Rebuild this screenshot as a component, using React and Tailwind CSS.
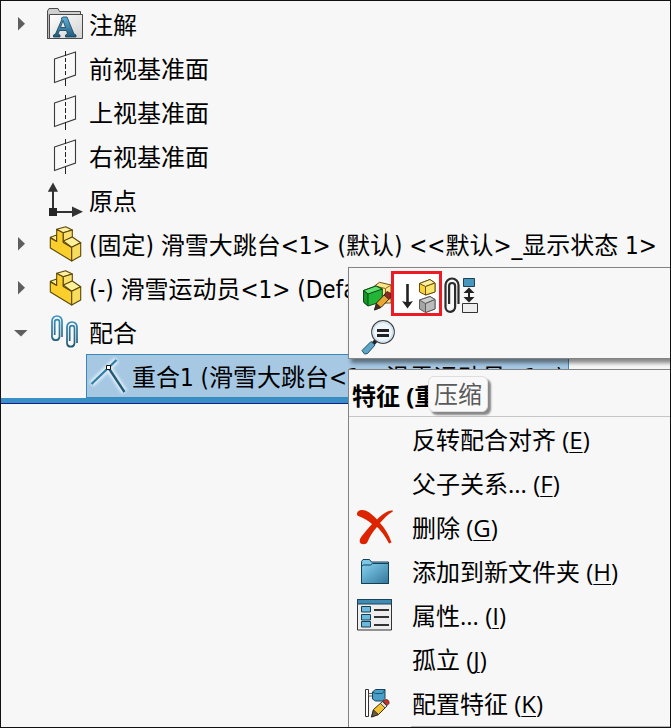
import React from "react";

const INK = "#3a3a3a";

function AnnotationFolderIcon() {
  return (
    <svg width="36" height="36" viewBox="0 0 36 36" className="block shrink-0 overflow-visible" aria-hidden="true">
      <defs>
        <linearGradient id="annPaper" x1="0" y1="0" x2="1" y2="1">
          <stop offset="0" stopColor="#ffffff" />
          <stop offset="1" stopColor="#d2d2d2" />
        </linearGradient>
        <linearGradient id="annLetter" x1="0" y1="0" x2="0" y2="1">
          <stop offset="0" stopColor="#5fb4dc" />
          <stop offset="1" stopColor="#1f5878" />
        </linearGradient>
      </defs>
      <path d="M.5 31V3L2 .5h9l1.500 3h21v4" fill="#cfcfcf" stroke="#4a4a4a" />
      <path d="M2.500 6.500h33v24h-33z" fill="url(#annPaper)" stroke="#4a4a4a" />
      <path d="M.5 4v26.500h2V6.500" fill="#b9b9b9" stroke="#4a4a4a" />
      <path
        d="M14 10.500l2-1.500h4l7 17 2 1v2H18.500v-2l2-1-1-3.500h-7L11 26l2 1v2H6.500v-2l2-1 6.500-15zM13.500 19.500h5l-2.500-7z"
        fill="url(#annLetter)"
        fillRule="evenodd"
        stroke="#153f58"
        strokeWidth=".8"
      />
    </svg>
  );
}

function PlaneIcon() {
  return (
    <svg width="36" height="36" viewBox="0 0 36 36" className="block shrink-0 overflow-visible" aria-hidden="true">
      <path d="M7.500 7L28.500 0v23L7.500 30.500z" fill="#f9f9f9" stroke={INK} strokeWidth="1.100" />
      <path d="M18.500-1v5M18.500 6v4M18.500 12v5M18.500 19v4M18.500 26v8" stroke="#222" />
    </svg>
  );
}

function OriginIcon() {
  return (
    <svg width="36" height="36" viewBox="0 0 36 36" className="block shrink-0 overflow-visible" aria-hidden="true">
      <path d="M6 25V5M8 28h20" stroke="#333" strokeWidth="2" fill="none" />
      <path d="M.8 7.700L6-1.500l5 9.200zM25 22.500l11 5.300L25 33z" fill="#333" />
      <path d="M2 24h8v8H2z" fill="#262626" />
    </svg>
  );
}

function PartIcon() {
  return (
    <svg width="36" height="36" viewBox="0 0 36 36" className="block shrink-0 overflow-visible" aria-hidden="true">
      <g stroke="#5d4708" strokeWidth="1.100" strokeLinejoin="round">
        <path d="M3.300 9.300L9.700 7v6.500z" fill="#fff08f" />
        <path d="M3.300 10l6.400 3.500V1.300l6.600 3.400v9.800l8.400 5V33L3.300 20z" fill="#fbcf2b" />
        <path d="M9.700 1.300l9-2.600L25.300 2l-9 2.700z" fill="#fff1a0" />
        <path d="M16.300 4.700l9-2.700v7l-9 5z" fill="#fbe070" />
        <path d="M16.300 13l9-4 8.400 5.700-9 4.600z" fill="#fff09a" />
        <path d="M24.700 19.300l9-4.600V28l-9 5z" fill="#f8dc5d" />
      </g>
    </svg>
  );
}

function MatesIcon() {
  return (
    <svg width="36" height="36" viewBox="0 0 36 36" className="block shrink-0 overflow-visible" aria-hidden="true">
      <defs>
        <linearGradient id="clipBlue" x1="0" y1="0" x2="0" y2="32" gradientUnits="userSpaceOnUse">
          <stop offset="0" stopColor="#3a94c1" />
          <stop offset="1" stopColor="#23566f" />
        </linearGradient>
      </defs>
      <g fill="none" stroke="url(#clipBlue)" strokeWidth="1.700">
        <path d="M15 21V5a5 5 0 0 0-10 0v16a3.800 3.800 0 0 0 7.500 0V6a2.400 2.400 0 0 0-4.800 0v13" />
        <path d="M30 27V11a5 5 0 0 0-10 0v16.500a3.800 3.800 0 0 0 7.500 0V12a2.400 2.400 0 0 0-4.800 0v13" />
      </g>
    </svg>
  );
}

function CoincidentIcon() {
  return (
    <svg width="36" height="36" viewBox="0 0 36 36" className="block shrink-0 overflow-visible" aria-hidden="true">
      <defs>
        <filter id="coinGlow" x="-30%" y="-30%" width="160%" height="160%">
          <feGaussianBlur stdDeviation="1.500" />
        </filter>
      </defs>
      <path d="M1.500 24L26.500 0M18.300 7.500L34.500 32" stroke="#e6f1fa" strokeWidth="6" filter="url(#coinGlow)" />
      <path d="M1.500 24L26.500 0" stroke="#2f7fa8" strokeWidth="2.400" />
      <path d="M18.300 7.500L34.500 32" stroke="#245a78" strokeWidth="2.400" />
      <path d="M16.500 5.500h4v4h-4z" fill="#fff" stroke="#111" />
    </svg>
  );
}

function EditPartIcon() {
  return (
    <svg width="30" height="45" viewBox="0 0 30 45" className="block shrink-0" aria-hidden="true">
      <g strokeLinejoin="round">
        <path d="M13.500 15l5-3.700L30 14v18H17z" fill="#fce58a" stroke="#6a5212" />
        <path d="M13.500 15l11 2.500L30 14M24.500 17.500V30" fill="none" stroke="#8a6a1a" />
        <path d="M2.500 19.500L15 15l6.300 3v12.500L7 35l-4.500-4z" fill="#22b537" stroke="#0a4a14" />
        <path d="M2.500 19.500L7 23l14.300-5L15 15z" fill="#5fe070" stroke="#0a4a14" />
        <path d="M7 23v12l-4.500-4V19.500z" fill="#149528" stroke="#0a4a14" />
        <path d="M13.500 39l2-7L25 22l5 4-9.500 10z" fill="#e9a632" stroke="#33230d" />
        <path d="M13.500 39l2-6.500 4.500 4z" fill="#3b3026" stroke="#33230d" strokeWidth=".7" />
        <path d="M23 24l3-3.500 4 2v4l-2 2z" fill="#8c2a22" stroke="#222" strokeWidth=".8" />
      </g>
    </svg>
  );
}

function SuppressIcon() {
  return (
    <svg width="45" height="39" viewBox="0 0 45 39" className="block shrink-0" aria-hidden="true">
      <path d="M13.500 10v19" stroke="#222" strokeWidth="2.600" />
      <path d="M8 27q5.500 2 11 0l-5.500 7.500z" fill="#222" />
      <g stroke="#6a500c" strokeLinejoin="round">
        <path d="M25.500 9.500L36 5.500l5 3.500v9l-9.500 3-6-3z" fill="#fbd13a" />
        <path d="M25.500 9.500l6 3L41 9l-5-3.500z" fill="#fff0a0" />
        <path d="M31.500 12.500V21L41 18V9z" fill="#fce36a" />
      </g>
      <g stroke="#5b5b5b" strokeLinejoin="round">
        <path d="M25.500 26L36 22.500l5 3v9.500l-9.500 3.500-6-3.500z" fill="#a5a5a5" />
        <path d="M25.500 26l6 3.500L41 25.500l-5-3z" fill="#cfcfcf" />
        <path d="M31.500 29.500v9L41 35v-9.500z" fill="#bcbcbc" />
      </g>
    </svg>
  );
}

function MateClipIcon() {
  return (
    <svg width="40" height="45" viewBox="0 0 40 45" className="block shrink-0" aria-hidden="true">
      <path
        d="M16.500 33V14a6.500 6.500 0 0 0-13 0v22a4.800 4.800 0 0 0 9.600 0V15a3 3 0 0 0-6 0v18"
        fill="none"
        stroke="#2b2b2b"
        strokeWidth="2.200"
      />
      <path d="M21.500 7.500h11v8h-11z" fill="#4697be" stroke="#1c4154" />
      <path d="M27 20v8" stroke="#222" strokeWidth="2" />
      <path d="M21.500 22l5.500-5.500 5.500 5.500zM21.500 26l5.500 5.500 5.500-5.500z" fill="#222" />
      <path d="M20.500 32.500h15v9h-15z" fill="#eee" stroke="#333" />
    </svg>
  );
}

function MagnifierIcon() {
  return (
    <svg width="36" height="38" viewBox="0 0 36 38" className="block shrink-0" aria-hidden="true">
      <path d="M11.500 27.500l4-4.500" stroke="#222" strokeWidth="4" />
      <path d="M1 33.500l9-9 4 3.500-7.500 8.500-3 .5z" fill="#5fa6c6" stroke="#1f4e66" />
      <circle cx="22" cy="15" r="11.300" fill="#eef6fb" stroke="#444" strokeWidth="1.200" />
      <circle cx="22" cy="15" r="9.800" fill="none" stroke="#cfe3f0" strokeWidth="1.500" />
      <path d="M16 13.500h12M16 18.500h12" stroke="#222" strokeWidth="2.800" />
    </svg>
  );
}

function DeleteIcon() {
  return (
    <svg width="36" height="36" viewBox="0 0 36 36" className="block shrink-0 overflow-visible" aria-hidden="true">
      <path
        d="M0 4C0 0 5-.8 8.500.5c5 2 8.500 6 11.500 9C24.500 5 29.500 1 35.500.3l.3 1.200C31 4 27 8.500 23 13c5 5.500 9 12 11.500 19.500L32 33.500C29 27.500 24.500 21 20 17 15.500 22 12.500 27 10.500 32c-1 3-7 3-7.700 0-.3-2 .5-4 1.700-5.500C8 22 11.500 18 15 14 11.500 11 7 8 2.500 6.500 1 6 0 5.500 0 4z"
        fill="#dd2400"
      />
    </svg>
  );
}

function FolderIcon() {
  return (
    <svg width="36" height="36" viewBox="0 0 36 36" className="block shrink-0" aria-hidden="true">
      <defs>
        <linearGradient id="folderBlue" x1="0" y1="0" x2="1" y2="1">
          <stop offset="0" stopColor="#86d2f0" />
          <stop offset="1" stopColor="#33779b" />
        </linearGradient>
      </defs>
      <path d="M4.500 29.500v-22L6 5.500h6.500l2 2.500h17v21.500z" fill="#7cc6e6" stroke="#143f56" />
      <path d="M4.500 29.500V12.500l2-1.500h7l2-1.500h16v20z" fill="url(#folderBlue)" stroke="#143f56" />
    </svg>
  );
}

function PropertiesIcon() {
  return (
    <svg width="36" height="36" viewBox="0 0 36 36" className="block shrink-0" aria-hidden="true">
      <path d="M.5 1.500h34v30.500H.5z" fill="#eeeeee" stroke="#333" />
      <path d="M.5 1.500h34v4.500H.5z" fill="#3f8bb3" stroke="#1d4358" />
      <path d="M4.500 8.500h9v5.500h-9zM4.500 16.500h9V22h-9zM4.500 23.500h9V29h-9z" fill="#6bb9dc" stroke="#173f54" />
      <path d="M17 12h15M17 19h15M17 27h15" stroke="#333" strokeWidth="1.800" />
    </svg>
  );
}

function ConfigureIcon() {
  return (
    <svg width="36" height="36" viewBox="0 0 36 36" className="block shrink-0" aria-hidden="true">
      <path d="M8.500 3.500h3v27h-3z" fill="#fff" stroke="#333" />
      <path d="M11.500 7.500h5v2.500h-5z" fill="#fff" stroke="#333" strokeWidth=".8" />
      <path d="M15.500 6l3-2.500h9.500v9L25.500 15h-7l-3-2z" fill="#489fca" stroke="#17425a" />
      <path d="M15.500 6l3 1.500h7L28 3.500" fill="none" stroke="#17425a" strokeWidth=".8" />
      <path d="M14.500 31l2-7.500 9-8 4.500 4.500-8.500 8.500z" fill="#f2c230" stroke="#3d2c0d" />
      <path d="M14.500 31l2-7 5 4.500z" fill="#6b5a48" stroke="#222" strokeWidth=".8" />
      <path d="M23.500 17.500l2-2 4.500 4.500-2 2z" fill="#ddd" stroke="#333" strokeWidth=".8" />
      <path d="M26 15l2.500-1.500q4 0 3.500 4L30 19.500z" fill="#c5302b" stroke="#5c1613" strokeWidth=".8" />
    </svg>
  );
}

function Toggle({ open }) {
  return (
    <button type="button" aria-label={open ? "折叠" : "展开"} className="flex h-6 w-full items-center justify-center">
      <svg width="14" height="18" viewBox="0 0 14 18" aria-hidden="true">
        {open ? <path d="M0 5h13.500L7 11.500z" fill="#5f5f5f" /> : <path d="M4 0v13.500L11 6.700z" fill="#5f5f5f" />}
      </svg>
    </button>
  );
}

const treeItems = [
  { icon: AnnotationFolderIcon, label: "注解", toggle: "closed" },
  { icon: PlaneIcon, label: "前视基准面" },
  { icon: PlaneIcon, label: "上视基准面" },
  { icon: PlaneIcon, label: "右视基准面" },
  { icon: OriginIcon, label: "原点" },
  { icon: PartIcon, label: "(固定) 滑雪大跳台<1> (默认) <<默认>_显示状态 1>", toggle: "closed" },
  { icon: PartIcon, label: "(-) 滑雪运动员<1> (Default)", toggle: "closed" },
  { icon: MatesIcon, label: "配合", toggle: "open" },
];

const menuItems = [
  { label: "反转配合对齐", hotkey: "E" },
  { label: "父子关系...", hotkey: "F" },
  { label: "删除", hotkey: "G", icon: DeleteIcon },
  { label: "添加到新文件夹", hotkey: "H", icon: FolderIcon },
  { label: "属性...", hotkey: "I", icon: PropertiesIcon },
  { label: "孤立", hotkey: "J" },
  { label: "配置特征", hotkey: "K", icon: ConfigureIcon },
];

function FeatureTree() {
  return (
    <div className="pt-px font-['DejaVu_Sans_Condensed','Noto_Sans_CJK_SC',sans-serif]">
      <ul>
        {treeItems.map(({ icon: Icon, label, toggle }) => (
          <li key={label} className="flex h-11 items-center pt-1">
            <div className="mr-1.5 w-10 shrink-0">{toggle && <Toggle open={toggle === "open"} />}</div>
            <Icon />
            <span className="ml-1.5">{label}</span>
          </li>
        ))}
        <li className="flex pl-[85px]">
          <div className="flex h-11 items-center border border-[#3a89b8] bg-[#a6c8e3] pt-1 pr-1 pl-[3px]">
            <CoincidentIcon />
            <span className="ml-1.5">{"重合1 (滑雪大跳台<1>,滑雪运动员<1>)"}</span>
          </div>
        </li>
      </ul>
      <div className="h-1.5 border-b border-[#1b1b8c] bg-[#378fc6]" />
    </div>
  );
}

function QuickToolbar() {
  return (
    <div
      role="toolbar"
      aria-label="快捷工具栏"
      className="absolute top-[266px] right-0 left-[347px] h-[92px] border-y border-l border-[#838383] bg-[#f7f7f7] pt-[3px] pl-3 shadow-[3px_4px_4px_rgba(0,0,0,0.45)]"
    >
      <div className="flex">
        <button type="button" aria-label="编辑零件">
          <EditPartIcon />
        </button>
        <button type="button" aria-label="压缩" className="border-3 border-[#ed1c24] bg-white">
          <SuppressIcon />
        </button>
        <button type="button" aria-label="配合">
          <MateClipIcon />
        </button>
      </div>
      <button type="button" aria-label="放大所选范围" className="block pt-px">
        <MagnifierIcon />
      </button>
    </div>
  );
}

function ContextMenu() {
  return (
    <div className="absolute top-[368px] right-0 left-[347px] border-t border-l border-[#838383] bg-[#f7f7f7]">
      <h2 className="h-[47px] border-b border-[#c6c6c6] pt-1 pl-[3px] leading-[44px] font-bold">特征 (重合1)</h2>
      <div role="menu" className="pt-px">
        {menuItems.map(({ label, hotkey, icon: Icon }) => (
          <button key={hotkey} type="button" role="menuitem" className="flex h-11 w-full items-center pl-2 text-left">
            <span className="mr-[19px] w-9 shrink-0">{Icon && <Icon />}</span>
            <span>
              {label} (<span className="underline decoration-1 underline-offset-3">{hotkey}</span>)
            </span>
          </button>
        ))}
      </div>
      <div className="ml-[62px] h-px bg-[#b5b5b5]" />
      <div
        role="tooltip"
        className="absolute top-1.5 left-[79px] rounded-md border border-[#dedede] bg-[#f9f9f9] px-[5px] leading-[34px] text-[#5a5a5a] shadow-[3px_3px_2px_rgba(0,0,0,0.45)]"
      >
        压缩
      </div>
    </div>
  );
}

export default function App() {
  return (
    <main className="relative h-screen w-full overflow-hidden border border-[#111] bg-[#f7f7f7] font-['Open_Sans','Noto_Sans_CJK_SC',sans-serif] text-2xl whitespace-nowrap text-black">
      <FeatureTree />
      <QuickToolbar />
      <ContextMenu />
    </main>
  );
}
